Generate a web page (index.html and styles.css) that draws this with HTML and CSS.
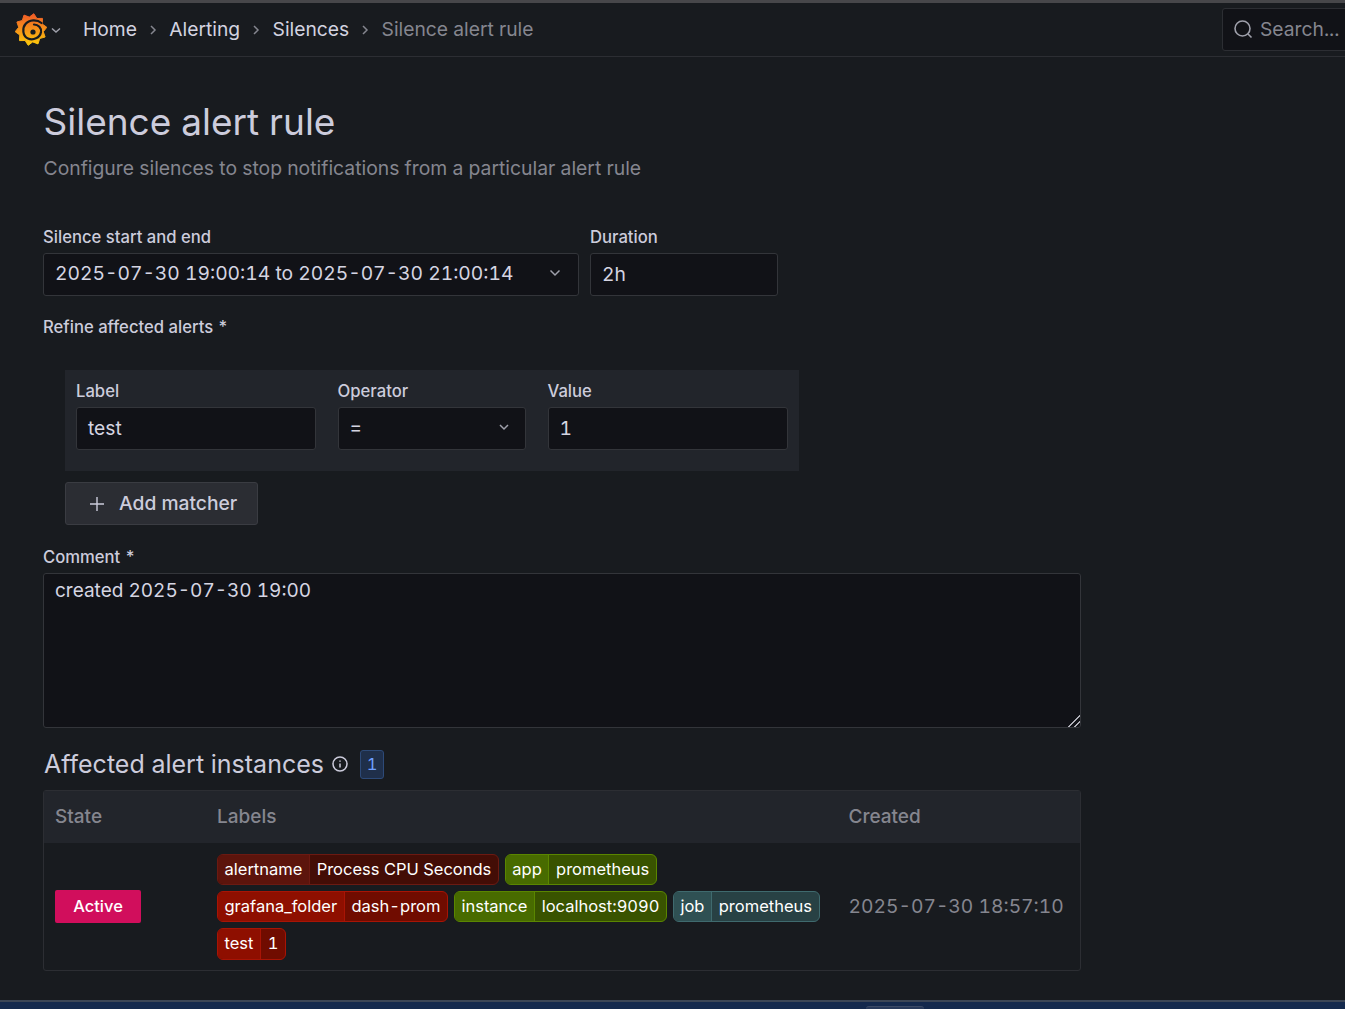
FILE: index.html
```html
<!DOCTYPE html>
<html lang="en">
<head>
    <meta charset="UTF-8">
    <meta name="viewport" content="width=device-width, initial-scale=1.0">
    <title>Silence alert rule</title>
    <link rel="stylesheet" href="styles.css">
</head>
<body>

<div class="page">
    <header class="topbar">
        <svg class="logo" viewBox="0 0 32 33" width="32" height="33">
            <defs>
                <linearGradient id="logoFill" x1="0" y1="0" x2="0" y2="1">
                    <stop offset="0" stop-color="#f05a28"/>
                    <stop offset="1" stop-color="#fbca0a"/>
                </linearGradient>
            </defs>
            <path fill="url(#logoFill)" stroke="url(#logoFill)" stroke-width="1" stroke-linejoin="round" d="M18.800 .7L21.900 5.500 27.500 5.400 27.200 11 31.800 14.300 28.300 18.700 30.100 24 24.700 25.500 23 30.900 17.700 28.900 13.200 32.300 10.100 27.500 4.500 27.600 4.800 22 .2 18.700 3.700 14.300 1.900 9 7.300 7.500 9 2.100 14.300 4.100z"/>
            <path fill="none" stroke="#181b1f" stroke-width="2.200" stroke-linecap="round" d="M26.500 10C22 6 14 6.500 10.500 11C7 15 7.500 23 13 25.500C18 27.800 25 25 26 19C26.500 15 23.500 11.500 19 11.500"/>
            <circle cx="18" cy="19" r="2.600" fill="#181b1f"/>
        </svg>
        <svg class="chevron logo-chevron" viewBox="0 0 12 12" width="12" height="12"><path d="M2 4.500L6 8l4-3.500"/></svg>
        <nav class="crumbs">
            <a>Home</a>
            <svg class="sep" viewBox="0 0 8 12" width="8" height="12"><path d="M2 2l4 4-4 4"/></svg>
            <a>Alerting</a>
            <svg class="sep" viewBox="0 0 8 12" width="8" height="12"><path d="M2 2l4 4-4 4"/></svg>
            <a>Silences</a>
            <svg class="sep" viewBox="0 0 8 12" width="8" height="12"><path d="M2 2l4 4-4 4"/></svg>
            <span class="current">Silence alert rule</span>
        </nav>
        <div class="search">
            <svg viewBox="0 0 20 20" width="20" height="20"><circle cx="9.500" cy="9.500" r="7.500"/><path d="M15 15l3.500 3.500"/></svg>
            <span>Search...</span>
        </div>
    </header>

    <main class="content">
        <h1>Silence alert rule</h1>
        <p class="subtitle">Configure silences to stop notifications from a particular alert rule</p>

        <div class="time-row">
            <div class="field range-field">
                <label>Silence start and end</label>
                <div class="input input-select">
                    <span>2025-07-30 19:00:14 to 2025-07-30 21:00:14</span>
                    <svg class="chevron" viewBox="0 0 12 12" width="12" height="12"><path d="M1.500 3.500L6 8l4.500-4.500"/></svg>
                </div>
            </div>
            <div class="field duration-field">
                <label>Duration</label>
                <div class="input">2h</div>
            </div>
        </div>

        <label class="refine-label">Refine affected alerts *</label>

        <div class="matcher">
            <div class="field matcher-name">
                <label>Label</label>
                <div class="input">test</div>
            </div>
            <div class="field matcher-op">
                <label>Operator</label>
                <div class="input input-select">
                    <span>=</span>
                    <svg class="chevron" viewBox="0 0 12 12" width="12" height="12"><path d="M2 4l4 4 4-4"/></svg>
                </div>
            </div>
            <div class="field matcher-value">
                <label>Value</label>
                <div class="input">1</div>
            </div>
        </div>

        <button class="add-btn" type="button">
            <svg viewBox="0 0 16 16" width="16" height="16"><path d="M8 1v14M1 8h14"/></svg>
            Add matcher
        </button>

        <div class="field comment-field">
            <label>Comment *</label>
            <textarea class="comment">created 2025-07-30 19:00</textarea>
        </div>

        <div class="section-head">
            <h2>Affected alert instances</h2>
            <svg class="info" viewBox="0 0 16 16" width="16" height="16"><circle cx="8" cy="8" r="7"/><path d="M8 7.500v4M8 4.500v1.200"/></svg>
            <span class="count">1</span>
        </div>

        <table class="instances">
            <thead>
                <tr>
                    <th class="col-state">State</th>
                    <th class="col-labels">Labels</th>
                    <th class="col-created">Created</th>
                </tr>
            </thead>
            <tbody>
                <tr>
                    <td><span class="state">Active</span></td>
                    <td>
                        <div class="labels">
                            <span class="tag tag-maroon"><b>alertname</b><i>Process CPU Seconds</i></span>
                            <span class="tag tag-green"><b>app</b><i>prometheus</i></span>
                            <span class="tag tag-red"><b>grafana_folder</b><i>dash-prom</i></span>
                            <span class="tag tag-green"><b>instance</b><i>localhost:9090</i></span>
                            <span class="tag tag-teal"><b>job</b><i>prometheus</i></span>
                            <span class="tag tag-red"><b>test</b><i>1</i></span>
                        </div>
                    </td>
                    <td class="created">2025-07-30 18:57:10</td>
                </tr>
            </tbody>
        </table>
    </main>

    <div class="dock"><span class="dock-tab"></span></div>
</div>

</body>
</html>
```

FILE: styles.css
```css
* {
    box-sizing: border-box;
}
html, body {
    height: 100%;
}
body {
    margin: 0;
    overflow: hidden;
    background-color: #181b1f;
    color: #ccccdc;
    font-family: Inter, "Noto Sans", sans-serif;
    font-size: 19.250px;
    font-variant-numeric: tabular-nums;
}
.page {
    height: 100%;
    display: flex;
    flex-direction: column;
    border-top: 3px solid #47474a;
}

/* top bar */
.topbar {
    flex: none;
    height: 54px;
    display: flex;
    align-items: center;
    padding-left: 15px;
    border-bottom: 1px solid #2c2e33;
}
.logo {
    flex: none;
}
.chevron {
    fill: none;
    stroke: #9fa0ab;
    stroke-width: 1.500;
    flex: none;
}
.logo-chevron {
    margin-left: 3px;
}
.crumbs {
    display: flex;
    align-items: center;
    margin-left: 21px;
    padding-bottom: 2px;
    color: #d3d3e0;
}
.sep {
    margin: 2px 12.200px 0;
    fill: none;
    stroke: #85868f;
    stroke-width: 1.500;
}
.crumbs .current {
    color: #85868f;
}
.search {
    flex: none;
    margin-left: auto;
    margin-right: -10px;
    width: 133px;
    height: 43px;
    display: flex;
    align-items: center;
    gap: 7px;
    padding-left: 10px;
    padding-bottom: 1px;
    background-color: #111217;
    border: 1px solid #2c2e33;
    border-radius: 3px;
    color: #85868f;
}
.search svg {
    flex: none;
    fill: none;
    stroke: #9fa0ab;
    stroke-width: 1.600;
}

/* form */
.content {
    flex: 1;
    min-height: 0;
    padding: 42px 0 0 43px;
}
h1 {
    margin: 0 0 0 .5px;
    font-size: 37px;
    font-weight: 400;
    line-height: 46px;
}
.subtitle {
    margin: 10px 0 0;
    padding-left: .5px;
    font-size: 19.350px;
    line-height: 26px;
    color: #85868f;
}
label {
    display: block;
    font-size: 16.650px;
    font-weight: 500;
    line-height: 20px;
    color: #ccccdc;
}
.field label {
    margin-bottom: 6px;
}
.time-row {
    display: flex;
    gap: 11px;
    margin-top: 46px;
}
.range-field {
    width: 536px;
}
.duration-field {
    width: 188px;
}
.input {
    height: 43px;
    display: flex;
    align-items: center;
    justify-content: space-between;
    padding: 0 11px 2px;
    background-color: #111217;
    border: 1px solid #33353a;
    border-radius: 3px;
    color: #d5d5e2;
}
.input-select {
    padding-right: 17px;
    padding-bottom: 4px;
}
.refine-label {
    margin-top: 21px;
}
.matcher {
    display: flex;
    gap: 21.500px;
    width: 734px;
    margin: 33px 0 0 22px;
    padding: 11px 11px 21px;
    background-color: #22252b;
}
.matcher-name {
    width: 240px;
}
.matcher-op {
    width: 188.500px;
}
.matcher-op .input {
    padding-right: 15px;
}
.matcher-value {
    width: 240px;
}
.add-btn {
    display: flex;
    align-items: center;
    gap: 14px;
    width: 193px;
    height: 43px;
    margin: 11px 0 0 22px;
    padding: 0 0 2px 23px;
    background-color: #2b2d33;
    border: 1px solid #3a3c42;
    border-radius: 3px;
    color: #ccccdc;
    font-family: inherit;
    font-size: 19.250px;
    font-weight: 500;
}
.add-btn svg {
    flex: none;
    margin-top: 2px;
    fill: none;
    stroke: #ccccdc;
    stroke-width: 1.400;
}
.comment-field {
    margin-top: 22px;
    width: 1038px;
}
.comment {
    display: block;
    width: 100%;
    height: 155px;
    padding: 4px 11px;
    background-color: #111217;
    border: 1px solid #33353a;
    border-radius: 3px;
    color: #d5d5e2;
    font-family: inherit;
    font-size: 19px;
    font-variant-numeric: tabular-nums;
    line-height: 26px;
}
.comment::-webkit-resizer {
    background: linear-gradient(135deg, transparent 59%, #b0b0b8 59%, #b0b0b8 65%, transparent 65%, transparent 80%, #b0b0b8 80%, #b0b0b8 86%, transparent 86%);
}

/* affected instances */
.section-head {
    display: flex;
    align-items: center;
    margin-top: 21px;
    height: 30px;
}
h2 {
    margin: 0 0 0 1px;
    font-size: 25px;
    font-weight: 400;
}
.info {
    margin-left: 8px;
    fill: none;
    stroke: #ccccdc;
    stroke-width: 1.500;
}
.count {
    display: flex;
    align-items: center;
    justify-content: center;
    width: 24px;
    height: 29px;
    margin-left: 12px;
    background-color: #1f2f4a;
    border: 1px solid #2d4a78;
    border-radius: 3px;
    color: #6e9fff;
    font-size: 16.500px;
}
.instances {
    width: 1038px;
    margin-top: 11px;
    border-collapse: separate;
    border-spacing: 0;
    border: 1px solid #2c2e33;
    border-radius: 3px;
}
.instances th {
    height: 52px;
    padding: 0 11px 2px;
    background-color: #22252b;
    color: #85868f;
    font-size: 19px;
    font-weight: 500;
    text-align: left;
}
.col-state {
    width: 162px;
}
.col-labels {
    width: 631.500px;
}
.instances td {
    padding: 11px 11px 10px;
    vertical-align: middle;
}
.instances td.created {
    padding-bottom: 12px;
}
.state {
    display: block;
    width: 86px;
    height: 33px;
    margin-bottom: 2px;
    background-color: #d10e5c;
    border-radius: 2px;
    color: #fff;
    font-size: 16.500px;
    font-weight: 500;
    line-height: 33px;
    text-align: center;
}
.labels {
    display: flex;
    flex-wrap: wrap;
    gap: 6px;
}
.tag {
    display: inline-flex;
    height: 31px;
    border: 1px solid;
    border-radius: 6px;
    overflow: hidden;
    color: #fff;
    font-size: 16.500px;
    line-height: 29px;
}
.tag:last-child {
    height: 32px;
}
.tag b, .tag i {
    padding: 0 6.500px;
    font-style: normal;
    font-weight: 400;
}
.tag i {
    padding-left: 6.800px;
}
.tag b {
    border-right: 1px solid;
    border-color: inherit;
}
.tag-maroon {
    border-color: #6b1a12;
    background-color: #430d06;
}
.tag-maroon b {
    background-color: #5c140c;
}
.tag-red {
    border-color: #a81405;
    background-color: #700c00;
}
.tag-red b {
    background-color: #8e0f00;
}
.tag-green {
    border-color: #5a8600;
    background-color: #395300;
}
.tag-green b {
    background-color: #486b00;
}
.tag-teal {
    border-color: #3f6a6e;
    background-color: #284144;
}
.tag-teal b {
    background-color: #2f5053;
}
.created {
    color: #85868f;
    white-space: nowrap;
}

.dock {
    flex: none;
    height: 9px;
    display: flex;
    justify-content: center;
    align-items: flex-end;
    background-color: #14294d;
    border-top: 2px solid #3c4656;
}
.dock-tab {
    width: 58px;
    height: 3px;
    margin-left: 445px;
    background-color: #27395a;
    border-top: 1px solid #3c4a66;
    border-radius: 3px 3px 0 0;
}
```
